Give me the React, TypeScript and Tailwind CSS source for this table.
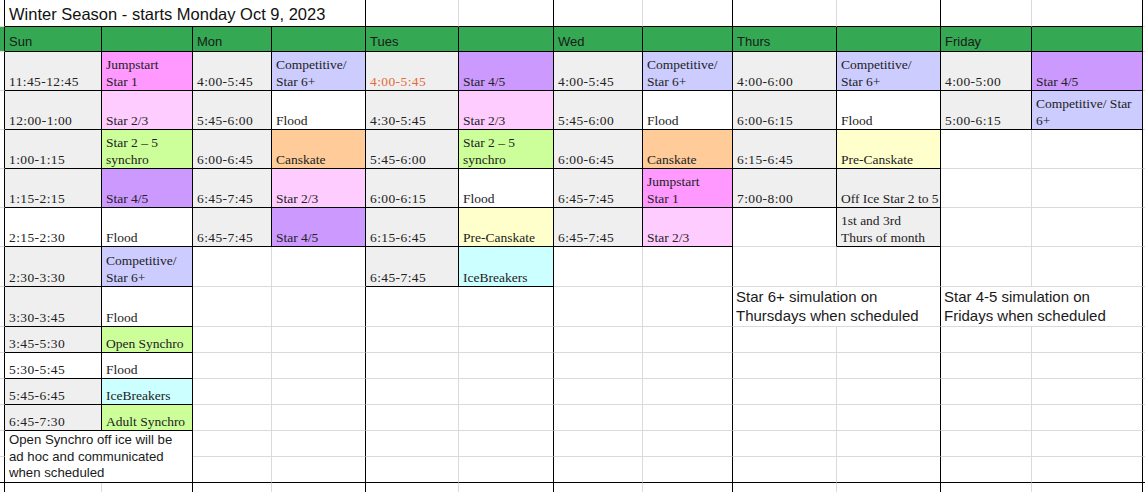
type Fill =
  | "none"
  | "gray"
  | "green"
  | "jump"
  | "s23"
  | "s45"
  | "comp"
  | "sync"
  | "can"
  | "pre"
  | "ice";

type Kind = "blank" | "title" | "head" | "time" | "act" | "note" | "memo";

type Spec = {
  kind: Kind;
  text?: string;
  fill?: Fill;
  cs?: 1 | 2 | 4;
  rs?: 1 | 2;
  boxed?: boolean;
  warn?: boolean;
};

type Placed = Spec & { r: number; c: number };

const FILL: Record<Fill, string> = {
  none: "bg-white",
  gray: "bg-[#efefef]",
  green: "bg-[#34a853]",
  jump: "bg-[#ff99ff]",
  s23: "bg-[#ffccff]",
  s45: "bg-[#cc99ff]",
  comp: "bg-[#ccccff]",
  sync: "bg-[#ccff99]",
  can: "bg-[#ffcc99]",
  pre: "bg-[#ffffcc]",
  ice: "bg-[#ccffff]",
};

const COL_SPAN = { 1: "", 2: "col-span-2", 4: "col-span-4" };
const ROW_SPAN = { 1: "", 2: "row-span-2" };

const KIND: Record<Kind, string> = {
  blank: "",
  title:
    "flex items-end pl-1 pb-[2px] font-['Liberation_Sans',sans-serif] text-[16.5px] leading-[19px] text-[#111]",
  head: "flex items-end pl-1 pb-[1px] font-['Liberation_Sans',sans-serif] text-[13px] leading-[16px] text-[#1a1a1a]",
  time: "flex items-end pl-1 font-['Liberation_Serif',serif] text-[13.5px] leading-[17px] tracking-[0.4px]",
  act: "flex items-end pl-1 font-['Liberation_Serif',serif] text-[13.5px] leading-[17px]",
  note: "flex items-start pl-[3px] font-['Liberation_Sans',sans-serif] text-[15px] leading-[19px] text-[#1a1a1a]",
  memo: "flex items-start pl-1 pt-[1px] font-['Liberation_Sans',sans-serif] text-[13.2px] leading-[16.5px] text-[#1a1a1a]",
};

const NCOLS = 14;
const NROWS = 16;
// right edges of these columns are the black day separators
const DAY_EDGES = new Set([0, 2, 4, 6, 8, 10, 12]);
const BOTTOM_RULE = 14;

const e = (): Spec => ({ kind: "blank" });
const blanks = (n: number) => Array.from({ length: n }, e);
const t = (text: string, fill: Fill = "gray", warn = false): Spec => ({
  kind: "time",
  text,
  fill,
  boxed: true,
  warn,
});
const a = (text: string, fill: Fill): Spec => ({ kind: "act", text, fill, boxed: true });
const h = (text = ""): Spec => ({ kind: "head", text, fill: "green", boxed: true });

const COMP = "Competitive/\nStar 6+";
const JUMP = "Jumpstart\nStar 1";
const SYNC = "Star 2 \u2013 5\nsynchro";

const ROWS: Spec[][] = [
  [e(), { kind: "title", text: "Winter Season - starts Monday Oct 9, 2023", cs: 4 }, ...blanks(9)],
  [
    { kind: "blank", fill: "green" },
    h("Sun"),
    h(),
    h("Mon"),
    h(),
    h("Tues"),
    h(),
    h("Wed"),
    h(),
    h("Thurs"),
    h(),
    h("Friday"),
    h(),
    e(),
  ],
  [
    e(),
    t("11:45-12:45"),
    a(JUMP, "jump"),
    t("4:00-5:45"),
    a(COMP, "comp"),
    t("4:00-5:45", "gray", true),
    a("Star 4/5", "s45"),
    t("4:00-5:45"),
    a(COMP, "comp"),
    t("4:00-6:00"),
    a(COMP, "comp"),
    t("4:00-5:00"),
    a("Star 4/5", "s45"),
    e(),
  ],
  [
    e(),
    t("12:00-1:00"),
    a("Star 2/3", "s23"),
    t("5:45-6:00"),
    a("Flood", "none"),
    t("4:30-5:45"),
    a("Star 2/3", "s23"),
    t("5:45-6:00"),
    a("Flood", "none"),
    t("6:00-6:15"),
    a("Flood", "none"),
    t("5:00-6:15"),
    a("Competitive/ Star\n6+", "comp"),
    e(),
  ],
  [
    e(),
    t("1:00-1:15"),
    a(SYNC, "sync"),
    t("6:00-6:45"),
    a("Canskate", "can"),
    t("5:45-6:00"),
    a(SYNC, "sync"),
    t("6:00-6:45"),
    a("Canskate", "can"),
    t("6:15-6:45"),
    a("Pre-Canskate", "pre"),
    ...blanks(3),
  ],
  [
    e(),
    t("1:15-2:15"),
    a("Star 4/5", "s45"),
    t("6:45-7:45"),
    a("Star 2/3", "s23"),
    t("6:00-6:15"),
    a("Flood", "none"),
    t("6:45-7:45"),
    a(JUMP, "jump"),
    t("7:00-8:00"),
    a("Off Ice Star 2 to 5", "gray"),
    ...blanks(3),
  ],
  [
    e(),
    t("2:15-2:30", "none"),
    a("Flood", "none"),
    t("6:45-7:45"),
    a("Star 4/5", "s45"),
    t("6:15-6:45"),
    a("Pre-Canskate", "pre"),
    t("6:45-7:45"),
    a("Star 2/3", "s23"),
    e(),
    a("1st and 3rd\nThurs of month", "gray"),
    ...blanks(3),
  ],
  [e(), t("2:30-3:30"), a(COMP, "comp"), e(), e(), t("6:45-7:45"), a("IceBreakers", "ice"), ...blanks(7)],
  [
    e(),
    t("3:30-3:45"),
    a("Flood", "none"),
    ...blanks(6),
    { kind: "note", text: "Star 6+ simulation on\nThursdays when scheduled", cs: 2 },
    { kind: "note", text: "Star 4-5 simulation on\nFridays when scheduled", cs: 2 },
    e(),
  ],
  [e(), t("3:45-5:30"), a("Open Synchro", "sync"), ...blanks(11)],
  [e(), t("5:30-5:45", "none"), a("Flood", "none"), ...blanks(11)],
  [e(), t("5:45-6:45"), a("IceBreakers", "ice"), ...blanks(11)],
  [e(), t("6:45-7:30"), a("Adult Synchro", "sync"), ...blanks(11)],
  [
    e(),
    {
      kind: "memo",
      text: "Open Synchro off ice will be\nad hoc and communicated\nwhen scheduled",
      cs: 2,
      rs: 2,
      boxed: true,
    },
    ...blanks(11),
  ],
  [e(), ...blanks(11)],
  blanks(14),
];

function place(rows: Spec[][]) {
  const owner: number[][] = Array.from({ length: NROWS }, () => Array(NCOLS).fill(-1));
  const out: Placed[] = [];
  rows.forEach((row, r) => {
    let c = 0;
    row.forEach((spec) => {
      while (owner[r][c] !== -1) c++;
      const cs = spec.cs ?? 1;
      const rs = spec.rs ?? 1;
      for (let i = 0; i < rs; i++) for (let j = 0; j < cs; j++) owner[r + i][c + j] = out.length;
      out.push({ ...spec, r, c });
      c += cs;
    });
  });
  return { out, owner };
}

const { out: CELLS, owner: OWNER } = place(ROWS);

const boxedAt = (r: number, c: number) =>
  r < NROWS && c < NCOLS && OWNER[r][c] >= 0 && !!CELLS[OWNER[r][c]].boxed;

function edgeClasses(p: Placed) {
  const cs = p.cs ?? 1;
  const rs = p.rs ?? 1;
  const rc = p.c + cs - 1;
  const br = p.r + rs - 1;

  let right = "";
  if (rc < NCOLS - 1) {
    let black = !!p.boxed || DAY_EDGES.has(rc);
    for (let i = p.r; i <= br; i++) if (boxedAt(i, rc + 1)) black = true;
    right = black ? "border-r border-r-black" : "border-r border-r-[#dadada]";
  }

  let bottom = "";
  if (br < NROWS - 1) {
    let black = !!p.boxed || br === BOTTOM_RULE;
    for (let j = p.c; j <= rc; j++) if (boxedAt(br + 1, j)) black = true;
    bottom = black ? "border-b border-b-black" : "border-b border-b-[#dadada]";
  }

  return `${right} ${bottom}`;
}

const SheetCell = ({ cell }: { cell: Placed }) => {
  const ink =
    cell.kind === "time" || cell.kind === "act"
      ? cell.warn
        ? "text-[#e5693a]"
        : "text-[#222]"
      : "";
  return (
    <div
      className={`overflow-hidden whitespace-pre ${FILL[cell.fill ?? "none"]} ${
        COL_SPAN[cell.cs ?? 1]
      } ${ROW_SPAN[cell.rs ?? 1]} ${KIND[cell.kind]} ${ink} ${edgeClasses(cell)}`}
    >
      {cell.text ? <span>{cell.text}</span> : null}
    </div>
  );
};

export default function App() {
  return (
    <div className="w-[1145px] h-[492px] overflow-hidden bg-white">
      <div className="grid grid-cols-[5px_97px_91px_79px_94px_93px_95px_89px_90px_104px_104px_91px_111px_2px] grid-rows-[27px_25px_39px_39px_39px_39px_39px_40px_40px_26px_26px_26px_26px_26px_26px_9px]">
        {CELLS.map((cell, i) => (
          <SheetCell key={i} cell={cell} />
        ))}
      </div>
    </div>
  );
}
